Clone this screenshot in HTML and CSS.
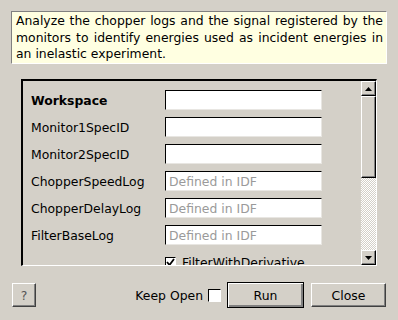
FILE: index.html
```html
<!DOCTYPE html>
<html lang="en">
<head>
    <meta charset="UTF-8">
    <title>Algorithm dialog</title>
    <link rel="stylesheet" href="styles.css">
</head>
<body>
  <div class="dialog">
    <div class="desc">Analyze the chopper logs and the signal registered by the monitors to identify energies used as incident energies in an inelastic experiment.</div>

    <div class="frame">
      <div class="props">
        <div class="row"><span class="label bold">Workspace</span><input class="field" type="text"></div>
        <div class="row"><span class="label">Monitor1SpecID</span><input class="field" type="text"></div>
        <div class="row"><span class="label">Monitor2SpecID</span><input class="field" type="text"></div>
        <div class="row"><span class="label">ChopperSpeedLog</span><input class="field" type="text" placeholder="Defined in IDF"></div>
        <div class="row"><span class="label">ChopperDelayLog</span><input class="field" type="text" placeholder="Defined in IDF"></div>
        <div class="row"><span class="label">FilterBaseLog</span><input class="field" type="text" placeholder="Defined in IDF"></div>
        <div class="row"><span class="label"></span><span class="check"><svg width="9" height="9" viewBox="0 0 9 9"><path d="M1 4 L3.5 7 L8 1" fill="none" stroke="#000" stroke-width="1.8"/></svg></span><span class="check-text">FilterWithDerivative</span></div>
      </div>
      <div class="scrollbar">
        <div class="sb-btn"><svg width="7" height="4" viewBox="0 0 7 4"><path d="M3.5 0 L7 4 L0 4 Z" fill="#000"/></svg></div>
        <div class="sb-thumb"></div>
        <div class="sb-trough"></div>
        <div class="sb-btn"><svg width="7" height="4" viewBox="0 0 7 4"><path d="M0 0 L7 0 L3.5 4 Z" fill="#000"/></svg></div>
      </div>
    </div>

    <div class="buttons">
      <button class="btn help">?</button>
      <div class="spacer"></div>
      <span class="keep">Keep Open</span>
      <span class="check big"></span>
      <button class="btn run">Run</button>
      <button class="btn close">Close</button>
    </div>
  </div>
</body>
</html>
```

FILE: styles.css
```css
body {
  margin: 0;
  background: #d4d0c8;
  font-family: "DejaVu Sans", sans-serif;
  font-size: 12.4px;
  color: #000;
}

.dialog {
  width: 398px;
  height: 320px;
  padding-top: 11px;
  box-sizing: border-box;
}

.desc {
  margin-left: 11px;
  width: 376px;
  height: 53px;
  box-sizing: border-box;
  padding: 1px 3px 0 4px;
  line-height: 16.5px;
  text-align: justify;
  background: #ffffe1;
  border: 1px solid #fff;
  border-top-color: #808080;
  border-left-color: #808080;
}

.frame {
  margin: 15px 0 0 21px;
  width: 356px;
  height: 187px;
  box-sizing: border-box;
  border-style: solid;
  border-width: 2px 1px 1px 2px;
  border-color: #000 #fff #fff #000;
  display: flex;
  overflow: hidden;
}

.props {
  flex: 1;
  padding: 9px 0 0 8px;
  display: flex;
  flex-direction: column;
  gap: 7px;
  overflow: hidden;
}

.row {
  display: flex;
  align-items: center;
  height: 20px;
  flex-shrink: 0;
}

.label {
  width: 134px;
  flex-shrink: 0;
}

.bold {
  font-weight: bold;
}

.field {
  width: 157px;
  height: 20px;
  box-sizing: border-box;
  margin: 0;
  padding: 0 3px;
  font-family: "DejaVu Sans", sans-serif;
  font-size: 12.4px;
  background: #fff;
  border: 1px solid #e8e6e2;
  border-top-color: #000;
  border-left-color: #000;
  outline: none;
}

.field::placeholder {
  color: #9a9a9a;
}

.check {
  width: 11px;
  height: 11px;
  box-sizing: border-box;
  background: #fff;
  border: 1px solid #fff;
  border-top-color: #000;
  border-left-color: #000;
  display: inline-flex;
  align-items: center;
  justify-content: center;
  flex-shrink: 0;
}

.check.big {
  width: 13px;
  height: 13px;
}

.check-text {
  margin-left: 6px;
}

.scrollbar {
  width: 15px;
  display: flex;
  flex-direction: column;
}

.sb-btn {
  height: 15px;
  flex-shrink: 0;
  box-sizing: border-box;
  border: 1px solid #000;
  border-top-color: #fff;
  border-left-color: #fff;
  box-shadow: inset -1px -1px 0 #808080;
  background: #d4d0c8;
  display: flex;
  align-items: center;
  justify-content: center;
}

.sb-thumb {
  height: 82px;
  box-sizing: border-box;
  border: 1px solid #000;
  border-top-color: #fff;
  border-left-color: #fff;
  box-shadow: inset -1px -1px 0 #808080;
  background: #d4d0c8;
}

.sb-trough {
  flex: 1;
  background: repeating-conic-gradient(#fff 0 25%, #d4d0c8 0 50%) 0 0 / 2px 2px;
}

.buttons {
  display: flex;
  align-items: center;
  margin: 16px 12px 0 12px;
  height: 26px;
}

.spacer {
  flex: 1;
}

.btn {
  height: 24px;
  margin: 0;
  padding: 0;
  font-family: "DejaVu Sans", sans-serif;
  font-size: 12.4px;
  color: #000;
  background: #d4d0c8;
  border: 1px solid #404040;
  border-top-color: #fff;
  border-left-color: #fff;
  box-shadow: inset -1px -1px 0 #808080;
}

.help {
  width: 24px;
  color: #555;
}

.keep {
  margin-right: 5px;
}

.run {
  width: 77px;
  height: 26px;
  margin-left: 6px;
  border: 1px solid #000;
  box-shadow: inset 1px 1px 0 #fff, inset -2px -2px 0 #808080;
}

.close {
  width: 75px;
  margin-left: 7px;
}
```
